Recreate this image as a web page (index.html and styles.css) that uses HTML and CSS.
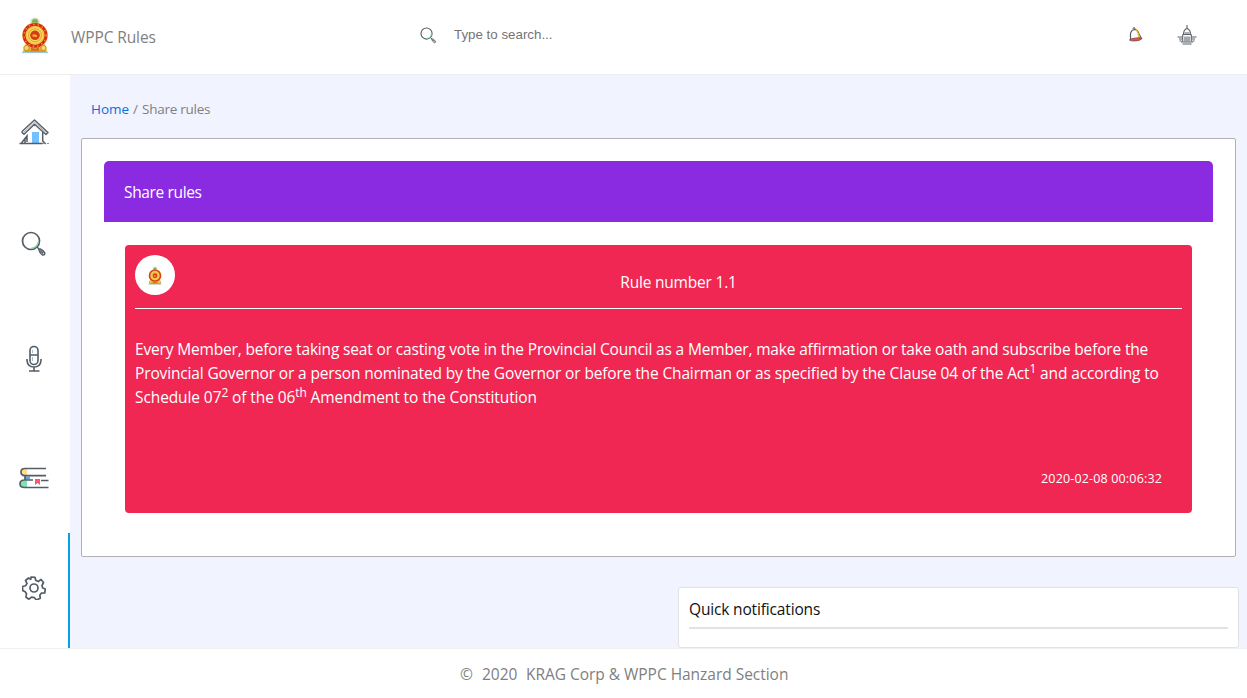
FILE: index.html
```html
<!DOCTYPE html>
<html lang="en">
<head>
<meta charset="utf-8">
<title>WPPC Rules</title>
<link rel="stylesheet" href="styles.css">
</head>
<body>
<svg class="defs" width="0" height="0" aria-hidden="true">
  <symbol id="emblem" viewBox="0 0 28 38">
    <ellipse cx="14" cy="5.800" rx="4.800" ry="4.300" fill="#cfe3c0"/>
    <circle cx="14" cy="6" r="3" fill="#7fab60"/>
    <path d="M5 27L1.500 36.500h25L23 27z" fill="#eab52e"/>
    <circle cx="14" cy="19.300" r="12.800" fill="#f0bd4a"/>
    <circle cx="14" cy="19.300" r="11" fill="none" stroke="#d62a1c" stroke-width="2.800"/>
    <circle cx="14" cy="19.300" r="11" fill="none" stroke="#ee8a2c" stroke-width="1.400" stroke-dasharray="1.500 3"/>
    <circle cx="14" cy="19.300" r="8.200" fill="#f7d95c"/>
    <circle cx="14" cy="19.300" r="6.500" fill="none" stroke="#e8a520" stroke-width="1"/>
    <circle cx="14" cy="19.300" r="4.800" fill="#d83a1b"/>
    <path d="M11.500 20.500v-2h3l1.500 1v1.500z" fill="#f5bb2a"/>
    <circle cx="5.500" cy="32" r="2.700" fill="#f6d564" stroke="#c98b22"/>
    <circle cx="22.500" cy="32" r="2.700" fill="#f6d564" stroke="#c98b22"/>
    <path d="M10 31l4 2 4-2v4h-8z" fill="#d86a22"/>
    <path d="M1 36.500h26" stroke="#9dc7cf" stroke-width="1.200"/>
    <path d="M4 35.200h20" stroke="#d5942a" stroke-width="1.200"/>
  </symbol>
  <symbol id="magnifier" viewBox="0 0 26 26">
    <circle cx="10" cy="10" r="8.500" fill="none" stroke="#545c66" stroke-width="1.700"/>
    <path d="M17.300 10.500A7.300 7.300 0 0 1 10 17.300" fill="none" stroke="#7fdcab" stroke-width="1.300"/>
    <path d="M16 16l2.500 2.500M17.600 17.800q3.500 0 6.200 4.200.3 2.200-2 2-3-1.500-4.200-6.200zM19.200 19.400l3 3" fill="none" stroke="#545c66" stroke-width="1.400" stroke-linejoin="round"/>
  </symbol>
</svg>
<div class="page">
  <header class="header">
    <svg class="logo"><use href="#emblem"/></svg>
    <span class="brand">WPPC Rules</span>
    <div class="search">
      <svg class="search-icon"><use href="#magnifier"/></svg>
      <span class="search-text">Type to search...</span>
    </div>
    <svg class="bell" viewBox="0 0 16 18">
      <path d="M2.500 13.500V8Q3 4 6.500 3.500q3.500 0 4.500 4.500l2.500 4.500z" fill="#fff" stroke="#555c66" stroke-width="1.200"/>
      <path d="M8 4q1.800 1.500 2.200 4l1.300 4" fill="none" stroke="#eabf35" stroke-width="1.500"/>
      <path d="M5 3q.2-2 1.700-1.200l.3 1.200" fill="none" stroke="#555c66"/>
      <path d="M1.500 14q1.500-1.500 6-2 5-.7 6.500.4-1.500 2-6 2.500-5 .5-6.500-.9z" fill="#e95846" stroke="#704d4c" stroke-width=".8"/>
    </svg>
    <svg class="capitol" viewBox="0 0 20 20" fill="none" stroke="#59616a">
      <path d="M10 0v4M6.500 9.500Q6.500 4.500 10 3.500q3.500 1 3.500 6M5.500 9.500h9M5.700 9.500v7M14.300 9.500v7M8 11.500v5M10 11.500v5M12 11.500v5" stroke-width="1.100"/>
      <path d="M7.500 8h5M.5 12h5M14.500 12h5M2 14h3M15 14h3M2.500 16h2M15.500 16h2M4 17h12M5.500 19h9" stroke-width="1"/>
    </svg>
  </header>
  <div class="body">
    <nav class="sidebar">
      <a class="nav-item nav-home"><svg class="icon-home" viewBox="0 0 30 28">
        <rect x="13" y="14" width="7" height="11" fill="#72c0ff"/>
        <path d="M3.500 13L15.500 2 29 14.500l-2 2L15.500 6.300 5 16.300 3 14.500z" fill="#fff" stroke="#59616a" stroke-width="1.500" stroke-linejoin="round"/>
        <path d="M4.500 14.500l11-10.200 12 10.500" stroke="#8b929a" fill="none" stroke-width=".8"/>
        <path d="M23.700 14v9l3 3M.500 25.500h23.300M8 24v-6l-5.500 7M6 21v4" fill="none" stroke="#545c66" stroke-width="1.500"/>
        <path d="M24 25.500h2M28 25.500h2" stroke="#8b929a"/>
      </svg></a>
      <a class="nav-item nav-search"><svg class="icon-search"><use href="#magnifier"/></svg></a>
      <a class="nav-item nav-mic"><svg class="icon-mic" viewBox="0 0 16 28" fill="none" stroke="#545c66" stroke-width="1.600">
        <rect x="4" y="1.500" width="8" height="18" rx="4"/>
        <path d="M4 10h8M1 14v1.500Q1.500 22 8 22t7-6.500V14M8 22v4M3 26h10.500"/>
        <path d="M6.500 5v3M6.500 12v4" stroke="#a7bdcc" stroke-width="1"/>
      </svg></a>
      <a class="nav-item nav-books"><svg class="icon-books" viewBox="0 0 30 22">
        <path d="M5 1.500h3v7H5Q2 8 2 5t3-3.500z" fill="#ffe18b"/>
        <path d="M4.500 13.500H8v6.500H4.500Q1 19.500 1 17t3.500-3.500z" fill="#80e4af"/>
        <path d="M6 9.500h5v3H6z" fill="#5ca9e8"/>
        <path d="M16 12h5v6l-2.500-2-2.500 2z" fill="#ff5370"/>
        <path d="M27 1.500H6Q2 1.500 2 5t4 3.700h21M6 9v3.500M14 13H5.500Q1 13 1 16.800t4.500 3.700H29.500M22 13.500h7.500" fill="none" stroke="#545c66" stroke-width="1.700"/>
      </svg></a>
      <a class="nav-item nav-settings active"><svg class="icon-gear" viewBox="0 0 24 24" fill="none" stroke="#545c66" stroke-width="1.700" stroke-linejoin="round">
        <path d="M9 1l4 .3.700 3 2.500 1.300L19 3.500l2.500 3-1.500 3 .7 2.500 2.600 1-.6 4-3.400.2-1.500 2 .5 3-4 1.800-2-2.500-2.800-.3-2.500 2-3-2 .5-3.500-1.300-2L.700 14.500l-.2-4L3.700 9.700 5 7.300 3.500 4.500l3-2.500 2.300 1.300z"/>
        <circle cx="12" cy="12" r="4"/>
      </svg></a>
    </nav>
    <main class="content">
      <div class="breadcrumb"><a class="crumb-link">Home</a><span class="crumb-sep">/</span><span class="crumb-current">Share rules</span></div>
      <section class="panel">
        <h1 class="panel-title">Share rules</h1>
        <article class="rule">
          <div class="rule-head">
            <span class="avatar"><svg class="avatar-emblem"><use href="#emblem"/></svg></span>
            <span class="rule-number">Rule number 1.1</span>
          </div>
          <p class="rule-text"><span class="line-a">Every Member, before taking seat or casting vote in the Provincial Council as a Member, make affirmation or take oath and subscribe before the</span><br><span class="line-b">Provincial Governor or a person nominated by the Governor or before the Chairman or as specified by the Clause 04 of the Act<sup>1</sup> and according to</span><br><span class="line-c">Schedule 07<sup>2</sup> of the 06<sup>th</sup> Amendment to the Constitution</span></p>
          <time class="rule-time">2020-02-08 00:06:32</time>
        </article>
      </section>
      <aside class="notifications"><h2 class="notifications-title">Quick notifications</h2></aside>
    </main>
  </div>
  <footer class="footer"><span class="copy">©</span><span class="year">2020</span><span class="owner">KRAG Corp &amp; WPPC Hanzard Section</span></footer>
</div>
</body>
</html>
```
FILE: styles.css
```css
* { box-sizing: border-box; }
body { margin: 0; font-family: "Open Sans", "Noto Sans", sans-serif; font-size: 15.5px; color: #808080; background: #fff; }
.defs { display: block; height: 0; }
.page { height: 698px; display: flex; flex-direction: column; overflow: hidden; }
.header { height: 75px; flex: none; border-bottom: 1px solid #eeeeee; display: flex; align-items: flex-start; }
.logo { width: 28px; height: 38px; margin: 16px 0 0 21px; }
.brand { width: 348px; margin-left: 22px; line-height: 24px; margin-top: 25px; white-space: nowrap; letter-spacing: -.1px; }
.search { display: flex; align-items: flex-start; width: 709px; }
.search-icon { width: 17px; height: 17px; margin: 27px 0 0 1px; }
.search-text { font: 13.333px/16px "Liberation Sans", sans-serif; color: #757575; margin: 27px 0 0 17px; }
.bell { width: 16px; height: 18px; margin-top: 26px; }
.capitol { width: 20px; height: 20px; margin: 25px 0 0 33px; }
.body { flex: 1; min-height: 0; display: flex; }
.sidebar { width: 70px; flex: none; display: flex; flex-direction: column; }
.nav-item { height: 115px; flex: none; display: flex; align-items: flex-start; }
.nav-home { height: 113px; padding: 43px 0 0 19px; }
.nav-search { padding: 43px 0 0 21px; }
.nav-mic { padding: 42px 0 0 26px; }
.nav-books { padding: 49px 0 0 19px; }
.nav-settings { padding: 43px 0 0 22px; }
.active { border-right: 2px solid #069fdf; }
.icon-home { width: 30px; height: 28px; }
.icon-search { width: 26px; height: 26px; }
.icon-mic { width: 16px; height: 28px; }
.icon-books { width: 30px; height: 22px; }
.icon-gear { width: 24px; height: 24px; }
.content { flex: 1; background: #f1f3ff; display: flex; flex-direction: column; }
.breadcrumb { display: flex; font-size: 13.5px; line-height: 20px; margin: 24px 0 19px 21px; }
.crumb-link { width: 42px; color: #0a6ee0; }
.crumb-sep { width: 9px; }
.crumb-current { letter-spacing: -.25px; }
.panel { flex: none; height: 419px; margin: 0 11px; border: 1px solid #b0b0b5; border-radius: 2px; background: #fff; padding: 22px; }
.panel-title { margin: 0; height: 61px; padding: 19px 20px; border-radius: 5px 5px 0 0; background: #8a2be2; color: #fff; font-size: 15.5px; line-height: 24px; font-weight: 400; letter-spacing: -.36px; }
.rule { margin: 23px 21px 0; height: 268px; padding: 10px; border-radius: 4px; background: #f02752; color: #fff; display: flex; flex-direction: column; }
.rule-head { height: 54px; display: flex; border-bottom: 1px solid #fff; }
.avatar { width: 40px; height: 40px; border-radius: 50%; background: #fff; display: flex; justify-content: center; align-items: center; }
.avatar-emblem { width: 14px; height: 19px; }
.rule-number { flex: 1; text-align: center; line-height: 24px; padding-top: 15px; letter-spacing: -.2px; }
.rule-text { margin: 28px 0 0; line-height: 24px; white-space: nowrap; }
.rule-text sup { font-size: 12px; line-height: 0; position: relative; top: -.5em; vertical-align: baseline; }
.line-a { letter-spacing: -.164px; }
.line-b { letter-spacing: -.14px; }
.line-c { letter-spacing: -.1px; }
.rule-time { align-self: flex-end; font-size: 12.5px; line-height: 20px; margin: 60px 20px 0 0; letter-spacing: .16px; }
.notifications { flex: none; width: 561px; height: 61px; margin: 30px 8px 0 auto; padding: 10px; background: #fff; border: 1px solid #e2e2e5; border-radius: 3px; }
.notifications-title { margin: 0; height: 31px; font-size: 15.5px; line-height: 23px; font-weight: 400; color: #111; border-bottom: 2px solid #e2e2e2; letter-spacing: -.16px; }
.footer { height: 50px; flex: none; border-top: 1px solid #f0f0f0; display: flex; padding: 13px 0 0 460px; line-height: 24px; white-space: nowrap; }
.copy { width: 22px; }
.year { width: 44px; }
.owner { letter-spacing: -.03px; }
```
